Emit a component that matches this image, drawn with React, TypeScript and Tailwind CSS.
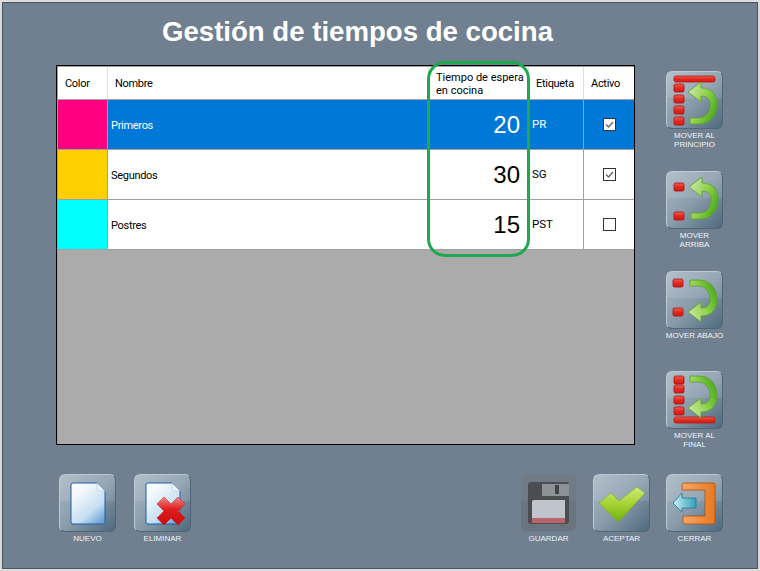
import { ReactNode } from "react";

const FONT = "font-['Liberation_Sans',Arial,sans-serif]";

function RedBlock({ x, y }: { x: number; y: number }) {
  return <rect x={x} y={y} width="10" height="8" rx="1.5" fill="url(#red)" stroke="#a81010" strokeWidth="0.8" />;
}

function RedBar({ y }: { y: number }) {
  return <rect x="8" y={y} width="41" height="6" rx="2" fill="url(#red)" stroke="#b01a10" strokeWidth="0.8" />;
}

// curved arrow, pointing left at the top; flipped for the downward ones
function BackArrow() {
  return (
    <path
      d="M22 21 L35 11 L35 17 C45 17 51 23 51 33 C51 45 44 53 33 53 L24 53 L24 47 L32 47 C40 47 44 41 44 34 C44 28 41 25 35 25 L35 31 Z"
      fill="url(#green)"
      stroke="#5aa028"
      strokeWidth="0.8"
    />
  );
}

function Defs() {
  return (
    <defs>
      <linearGradient id="red" x1="0" y1="0" x2="0" y2="1">
        <stop offset="0" stopColor="#f06050" />
        <stop offset="0.5" stopColor="#e02a20" />
        <stop offset="1" stopColor="#d81a12" />
      </linearGradient>
      <linearGradient id="green" x1="0" y1="0" x2="1" y2="0.6">
        <stop offset="0" stopColor="#d4ecb0" />
        <stop offset="0.6" stopColor="#8fd04c" />
        <stop offset="1" stopColor="#4fae22" />
      </linearGradient>
      <linearGradient id="paper" x1="0.1" y1="0" x2="0.8" y2="1">
        <stop offset="0" stopColor="#ffffff" />
        <stop offset="0.25" stopColor="#f0f7fc" />
        <stop offset="0.7" stopColor="#c6dff2" />
        <stop offset="1" stopColor="#6fa4d4" />
      </linearGradient>
      <linearGradient id="check" x1="0" y1="0" x2="0" y2="1">
        <stop offset="0" stopColor="#cfe878" />
        <stop offset="0.5" stopColor="#a4d232" />
        <stop offset="1" stopColor="#6cb010" />
      </linearGradient>
      <linearGradient id="orange" x1="0" y1="0" x2="1" y2="0">
        <stop offset="0" stopColor="#f8a868" />
        <stop offset="1" stopColor="#e87820" />
      </linearGradient>
      <linearGradient id="cyan" x1="0" y1="0" x2="1" y2="0">
        <stop offset="0" stopColor="#c8f0f8" />
        <stop offset="1" stopColor="#30a0b8" />
      </linearGradient>
      <linearGradient id="cross" x1="0" y1="0" x2="0" y2="1">
        <stop offset="0" stopColor="#f08a8a" />
        <stop offset="0.45" stopColor="#e01c1c" />
        <stop offset="1" stopColor="#c80c0c" />
      </linearGradient>
    </defs>
  );
}

function IconButton({ label, icon, dim }: { label: ReactNode; icon: ReactNode; dim?: boolean }) {
  return (
    <div className="flex w-[79px] flex-col items-center">
      <div
        className={`relative h-[58px] w-[57px] overflow-hidden rounded-[6px] border-t border-l border-r border-b ${
          dim
            ? "border-[#757f89] bg-[#69747f]"
            : "border-t-[#bcc8d2] border-l-[#bcc8d2] border-r-[#4f6678] border-b-[#4f6678] bg-gradient-to-br from-[#a9b8c4] via-[#8a9cab] to-[#4f6a7e]"
        }`}
      >
        <div className={`absolute inset-x-0 top-0 h-[26px] ${dim ? "bg-white/5" : "bg-white/10"}`} />
        <svg viewBox="0 0 57 58" className="absolute top-[-1px] left-[-1px] h-[58px] w-[57px]">
          <Defs />
          {icon}
        </svg>
      </div>
      <div className="mt-[2px] text-center text-[8px] leading-[9px] text-[#eef3f7]">{label}</div>
    </div>
  );
}

function Doc() {
  return (
    <>
      <path
        d="M14 9 H38 L46 17 V48 Q46 50 44 50 H14 Q12 50 12 48 V11 Q12 9 14 9 Z"
        fill="url(#paper)"
        stroke="#1f5ea8"
        strokeWidth="1"
      />
      <path d="M38 9 L46 17 H40 Q38 17 38 15 Z" fill="#eef4fa" stroke="#9cbcd8" strokeWidth="0.5" />
    </>
  );
}

function CheckBox({ checked }: { checked?: boolean }) {
  return (
    <div className="flex h-[13px] w-[13px] items-center justify-center border border-[#333] bg-white">
      {checked && (
        <svg viewBox="0 0 11 11" className="h-[11px] w-[11px]">
          <path d="M2 5.5 L4.5 8 L9 3" fill="none" stroke="#666" strokeWidth="1.3" />
        </svg>
      )}
    </div>
  );
}

const rows = [
  { color: "bg-[#ff0080]", name: "Primeros", time: "20", tag: "PR", active: true, selected: true },
  { color: "bg-[#ffd000]", name: "Segundos", time: "30", tag: "SG", active: true, selected: false },
  { color: "bg-[#00ffff]", name: "Postres", time: "15", tag: "PST", active: false, selected: false },
];

export default function App() {
  return (
    <div className={`${FONT} h-[571px] w-[760px] overflow-hidden border-2 border-[#dcdcdc]`}>
      <div className="h-full border border-[#4a5560] bg-[#708090]">
        <h1 className="mt-[12px] h-[34px] pr-[45px] text-center text-[27.6px] leading-[34px] font-bold text-white">
          Gestión de tiempos de cocina
        </h1>

        <div className="mt-[16px] ml-[53px] flex items-start">
          {/* Grid */}
          <div className="relative h-[380px] w-[579px] border border-black">
            <div className="flex h-full flex-col border-t border-l border-[#a0a0a0] bg-[#ababab] font-['Roboto',Arial,sans-serif]">
              <div className="flex h-[33px] shrink-0 border-b border-[#a0a0a0] bg-white text-[11px] tracking-[-0.3px] text-black">
                <div className="flex w-[50px] items-center border-r border-[#e0e0e0] pt-[3px] pl-[7px]">Color</div>
                <div className="flex w-[321px] items-center border-r border-[#e0e0e0] pt-[3px] pl-[7px]">Nombre</div>
                <div className="flex w-[100px] items-center border-r border-[#e0e0e0] pt-[1px] pl-[7px] leading-[13px] tracking-normal">
                  <span>
                    Tiempo de espera
                    <br />
                    en cocina
                  </span>
                </div>
                <div className="flex w-[55px] items-center border-r border-[#e0e0e0] pt-[3px] pl-[7px]">Etiqueta</div>
                <div className="flex flex-1 items-center pt-[3px] pl-[7px]">Activo</div>
              </div>

              {rows.map((r) => (
                <div
                  key={r.name}
                  className={`flex h-[50px] shrink-0 border-b border-[#a0a0a0] text-[11px] ${
                    r.selected ? "bg-[#0078d7] text-white" : "bg-white text-black"
                  }`}
                >
                  <div className={`w-[50px] border-r border-[#a0a0a0] ${r.color}`} />
                  <div className="flex w-[321px] items-center pt-[3px] pl-[3px] tracking-[-0.3px]">{r.name}</div>
                  <div className="flex w-[100px] items-center justify-end pr-[9px] font-['Liberation_Sans',Arial,sans-serif] text-[24px]">
                    {r.time}
                  </div>
                  <div className="flex w-[55px] items-center border-r border-[#a0a0a0] pt-[1px] pl-[3px] text-[11.5px]">
                    {r.tag}
                  </div>
                  <div className="flex flex-1 items-center justify-center">
                    <CheckBox checked={r.active} />
                  </div>
                </div>
              ))}
            </div>

            {/* Highlight drawn over the time column */}
            <div className="absolute top-[-5px] left-[370px] h-[196px] w-[103px] rounded-[18px] border-[3px] border-[#1fa850]" />
          </div>

          {/* Move buttons */}
          <div className="ml-[20px] flex flex-col pt-[6px]">
            <div className="h-[100px]">
              <IconButton
                label={<>MOVER AL<br />PRINCIPIO</>}
                icon={
                  <>
                    <RedBar y={5} />
                    <RedBlock x={8} y={13} />
                    <RedBlock x={8} y={24} />
                    <RedBlock x={8} y={35} />
                    <RedBlock x={8} y={46} />
                    <BackArrow />
                  </>
                }
              />
            </div>
            <div className="h-[100px]">
              <IconButton
                label={<>MOVER<br />ARRIBA</>}
                icon={
                  <>
                    <RedBlock x={8} y={12} />
                    <RedBlock x={8} y={41} />
                    <g transform="translate(1 -5)">
                      <BackArrow />
                    </g>
                  </>
                }
              />
            </div>
            <div className="h-[100px]">
              <IconButton
                label="MOVER ABAJO"
                icon={
                  <>
                    <RedBlock x={7} y={8} />
                    <RedBlock x={7} y={37} />
                    <g transform="matrix(1 0 0 -1 0 62)">
                      <BackArrow />
                    </g>
                  </>
                }
              />
            </div>
            <div>
              <IconButton
                label={<>MOVER AL<br />FINAL</>}
                icon={
                  <>
                    <RedBlock x={8} y={5} />
                    <RedBlock x={8} y={14} />
                    <RedBlock x={8} y={25} />
                    <RedBlock x={8} y={36} />
                    <RedBar y={46} />
                    <g transform="matrix(1 0 0 -1 0 58)">
                      <BackArrow />
                    </g>
                  </>
                }
              />
            </div>
          </div>
        </div>

        {/* Bottom buttons */}
        <div className="mt-[25px] ml-[45px] flex">
          <div className="w-[75px]">
            <IconButton label="NUEVO" icon={<Doc />} />
          </div>
          <IconButton
            label="ELIMINAR"
            icon={
              <>
                <Doc />
                <path
                  d="M30 23 L37 30 L44 23 L51 30 L44 37 L51 44 L44 51 L37 44 L30 51 L23 44 L30 37 L23 30 Z"
                  fill="url(#cross)"
                  stroke="#c01010"
                  strokeWidth="0.5"
                />
              </>
            }
          />
          <div className="ml-[307px] flex">
            <IconButton
              label="GUARDAR"
              dim
              icon={
                <>
                  <rect x="8" y="8" width="41" height="42" rx="3" fill="#4a4d52" />
                  <rect x="22" y="10" width="27" height="12" fill="#8d9298" />
                  <rect x="35" y="11" width="4" height="9" fill="#3f444a" />
                  <path d="M14 26 H45 V49 H12 V28 Q12 26 14 26 Z" fill="#c0c4cc" />
                  <rect x="12" y="44" width="33" height="5" fill="#b8646a" />
                </>
              }
            />
            <div className="-ml-[6px]">
              <IconButton
                label="ACEPTAR"
                icon={
                  <path
                    d="M6 29 L18 19 L26 27 L44 13 L52 19 L25 48 Z"
                    fill="url(#check)"
                    stroke="#7cb020"
                    strokeWidth="0.6"
                  />
                }
              />
            </div>
            <div className="-ml-[6px]">
              <IconButton
                label="CERRAR"
                icon={
                  <>
                    <path
                      d="M18 9 H47 Q49 9 49 11 V48 Q49 50 47 50 H19 Q17 50 17 48 V42 H39 V16 H16 V11 Q16 9 18 9 Z"
                      fill="url(#orange)"
                      stroke="#a85010"
                      strokeWidth="0.8"
                    />
                    <path
                      d="M7 29 L16 19 V24 H30 V34 H16 V38 Z"
                      fill="url(#cyan)"
                      stroke="#207890"
                      strokeWidth="0.8"
                    />
                  </>
                }
              />
            </div>
          </div>
        </div>
      </div>
    </div>
  );
}
